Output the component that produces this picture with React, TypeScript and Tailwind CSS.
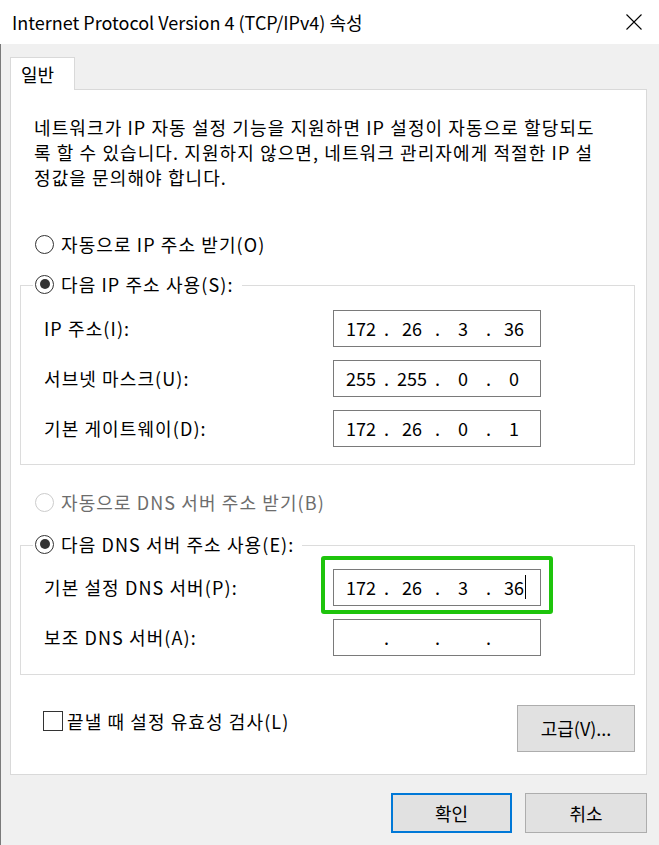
import { Fragment } from 'react'

function Radio({ checked, disabled }: { checked?: boolean; disabled?: boolean }) {
    return (
        <span
            className={`w-[19px] h-[19px] shrink-0 rounded-full border bg-white flex items-center justify-center ${
                disabled ? 'border-[#cccccc]' : 'border-[#333333]'
            }`}
        >
            {checked && <span className="w-[10px] h-[10px] rounded-full bg-[#333333]" />}
        </span>
    )
}

function IpBox({ octets, caret }: { octets: string[]; caret?: boolean }) {
    return (
        <div className="w-[208px] h-[37px] border border-[#7a7a7a] bg-white flex items-center pl-[6px] tracking-normal">
            {octets.map((o, i) => (
                <Fragment key={i}>
                    <span className="w-[42px] text-center">
                        <span className="relative">
                            {o}
                            {caret && i === 3 && (
                                <span className="absolute right-[-2px] top-[1px] bottom-[1px] w-px bg-black" />
                            )}
                        </span>
                    </span>
                    {i < 3 && <span className="w-[9px] text-center">.</span>}
                </Fragment>
            ))}
        </div>
    )
}

function Row({ label, children }: { label: string; children: React.ReactNode }) {
    return (
        <div className="h-[37px] flex items-center">
            <span className="w-[312px] pl-[23px]">{label}</span>
            {children}
        </div>
    )
}

export default function App() {
    return (
        <div className="w-[659px] h-[845px] bg-[#f0f0f0] text-black text-[18px] font-['Noto_Sans_CJK_KR',sans-serif] flex flex-col overflow-hidden">
            {/* Title bar */}
            <div className="h-[44px] bg-white flex items-center justify-between pl-[12px] pr-[17px]">
                <span>Internet Protocol Version 4 (TCP/IPv4) 속성</span>
                <svg width="16" height="16" viewBox="0 0 16 16" className="text-black">
                    <path d="M0.5 0.5 L15.5 15.5 M15.5 0.5 L0.5 15.5" stroke="currentColor" strokeWidth="1.1" />
                </svg>
            </div>

            <div className="flex-1 border-l border-[#7a7a7a] pl-[9px] pr-[12px] pt-[13px]">
                {/* Tab */}
                <div className="relative z-10 -mb-px w-[65px] h-[33px] bg-white border border-b-0 border-[#d9d9d9] flex items-center pl-[10px]">
                    일반
                </div>

                {/* Panel */}
                <div className="border border-[#d9d9d9] bg-white pl-[9px] pr-[11px] pt-[25px] pb-[22px] tracking-[1.1px]">
                    <div className="ml-[14px] leading-[25px] whitespace-nowrap">
                        네트워크가 IP 자동 설정 기능을 지원하면 IP 설정이 자동으로 할당되도
                        <br />
                        록 할 수 있습니다. 지원하지 않으면, 네트워크 관리자에게 적절한 IP 설
                        <br />
                        정값을 문의해야 합니다.
                    </div>

                    <div className="mt-[42px] h-[24px] ml-[15px] flex items-center gap-[7px]">
                        <Radio />
                        <span>자동으로 IP 주소 받기(O)</span>
                    </div>

                    {/* Group 1 */}
                    <div className="mt-[16px] relative z-10 h-[24px] ml-[13px] w-fit bg-white pl-[2px] pr-[8px] flex items-center gap-[7px]">
                        <Radio checked />
                        <span>다음 IP 주소 사용(S):</span>
                    </div>
                    <div className="-mt-[11px] border border-[#dcdcdc] pt-[24px] pb-[17px] flex flex-col gap-[13px]">
                        <Row label="IP 주소(I):">
                            <IpBox octets={['172', '26', '3', '36']} />
                        </Row>
                        <Row label="서브넷 마스크(U):">
                            <IpBox octets={['255', '255', '0', '0']} />
                        </Row>
                        <Row label="기본 게이트웨이(D):">
                            <IpBox octets={['172', '26', '0', '1']} />
                        </Row>
                    </div>

                    <div className="mt-[25px] h-[24px] ml-[15px] flex items-center gap-[7px] text-[#6d6d6d]">
                        <Radio disabled />
                        <span>자동으로 DNS 서버 주소 받기(B)</span>
                    </div>

                    {/* Group 2 */}
                    <div className="mt-[18px] relative z-10 h-[24px] ml-[13px] w-fit bg-white pl-[2px] pr-[8px] flex items-center gap-[7px]">
                        <Radio checked />
                        <span>다음 DNS 서버 주소 사용(E):</span>
                    </div>
                    <div className="-mt-[11px] border border-[#dcdcdc] pt-[23px] pb-[18px] flex flex-col gap-[13px]">
                        <Row label="기본 설정 DNS 서버(P):">
                            <div className="relative">
                                <IpBox octets={['172', '26', '3', '36']} caret />
                                <div className="absolute -top-[13px] -bottom-[8px] -left-[12px] -right-[12px] border-[4px] border-[#1ec40c] rounded-[3px]" />
                            </div>
                        </Row>
                        <Row label="보조 DNS 서버(A):">
                            <IpBox octets={['', '', '', '']} />
                        </Row>
                    </div>

                    {/* Bottom row */}
                    <div className="mt-[30px] flex justify-between">
                        <div className="mt-[6px] ml-[23px] h-[20px] flex items-center gap-[4px]">
                            <span className="w-[20px] h-[20px] border border-[#333333] bg-white" />
                            <span>끝낼 때 설정 유효성 검사(L)</span>
                        </div>
                        <button className="w-[118px] h-[47px] bg-[#e1e1e1] border border-[#adadad] tracking-normal">
                            고급(V)...
                        </button>
                    </div>
                </div>

                {/* Dialog buttons */}
                <div className="mt-[18px] flex justify-end gap-[13px]">
                    <button className="w-[121px] h-[40px] bg-[#e1e1e1] border-2 border-[#0078d7]">확인</button>
                    <button className="w-[122px] h-[40px] bg-[#e1e1e1] border border-[#adadad]">취소</button>
                </div>
            </div>
        </div>
    )
}
